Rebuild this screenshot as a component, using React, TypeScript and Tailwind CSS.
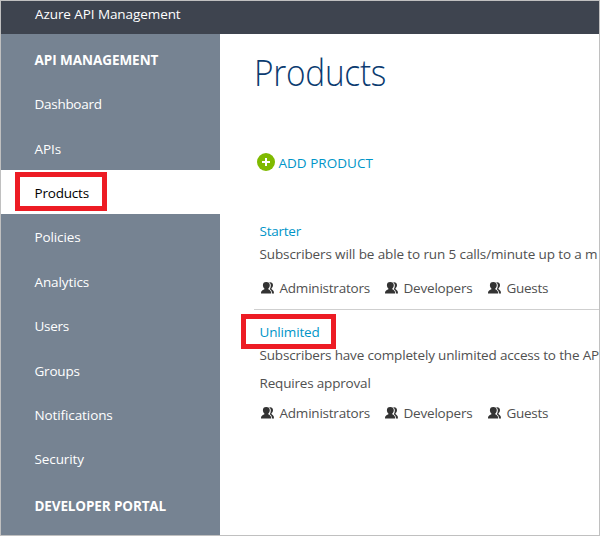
const navItems = [
  { label: 'Dashboard', tracking: 'tracking-[-0.28px]' },
  { label: 'APIs', tracking: 'tracking-[-0.1px]', nudge: true },
  { label: 'Products', tracking: 'tracking-[-0.2px]', active: true },
  { label: 'Policies', tracking: 'tracking-[-0.12px]' },
  { label: 'Analytics', tracking: 'tracking-[-0.1px]' },
  { label: 'Users', tracking: 'tracking-[-0.3px]' },
  { label: 'Groups', tracking: 'tracking-[-0.2px]', nudge: true },
  { label: 'Notifications', tracking: 'tracking-[-0.1px]' },
  { label: 'Security', tracking: 'tracking-[-0.1px]' },
];

function PeopleIcon() {
  return (
    <svg className="mb-px block h-[12px] w-[13px] shrink-0" viewBox="0 0 13 12" fill="#333">
      <path d="M8 .3C10.200-.3 12 .8 12 3c0 1.700-.8 2.700-1.500 3.300v.8c1 .9 2.500 1.500 2.500 4.400h-2c-.1-2.500-1-3.400-2.200-4.300.7-1.200 1.100-2.800 1-4.200C9.700 2 9 .9 8 .3z" />
      <path d="M5.200 0C7.700 0 8.800 1.200 8.800 3.300c0 1.600-.8 2.700-1.500 3.200v.8c1 .8 2.900 1.100 2.900 4.200H0c0-3.100 2.300-3.400 3.400-4.200v-.8C2.700 6 1.900 4.900 1.900 3.300 1.900 1.200 2.900 0 5.200 0z" />
    </svg>
  );
}

function Groups() {
  return (
    <div className="flex h-5 items-center text-[#505050]">
      <div className="flex w-[124px] items-center gap-[5.5px]"><PeopleIcon /><span className="tracking-[-0.22px]">Administrators</span></div>
      <div className="flex w-[103px] items-center gap-[5.5px]"><PeopleIcon /><span className="tracking-[-0.2px]">Developers</span></div>
      <div className="flex items-center gap-[5.5px]"><PeopleIcon /><span className="tracking-[-0.3px]">Guests</span></div>
    </div>
  );
}

export default function App() {
  return (
    <div className="flex h-[536px] w-[600px] flex-col overflow-hidden border border-[#c0c0c0] bg-white font-['Open_Sans','Noto_Sans',sans-serif] text-[13.5px] leading-5 whitespace-nowrap">
      <header className="h-[33px] shrink-0 bg-[#3e444f] pt-[3px] pl-[34px] text-white">
        <span className="tracking-[-0.08px]">Azure API Management</span>
      </header>
      <div className="flex min-h-0 flex-1">
        <nav className="w-[219px] shrink-0 bg-[#768392] text-white">
          <div className="h-[47.2px] pt-4 pl-[33.5px] font-bold"><span className="tracking-[-0.05px]">API MANAGEMENT</span></div>
          {navItems.map((item) => (
            <div key={item.label} className={`flex h-[44.4px] items-center ${item.active ? 'bg-white pl-[14px] text-black' : item.nudge ? 'pt-[2.4px] pl-[33.5px]' : 'pt-[1.2px] pl-[33.5px]'}`}>
              {item.active ? (
                <span className="mt-[-0.5px] flex h-[39px] w-[92px] items-center border-5 border-[#ed1c24] pt-[2px] pl-[14.5px]"><span className={item.tracking}>{item.label}</span></span>
              ) : (
                <span className={item.tracking}>{item.label}</span>
              )}
            </div>
          ))}
          <div className="pt-[15px] pl-[33.5px] font-bold"><span className="tracking-[-0.13px]">DEVELOPER PORTAL</span></div>
        </nav>
        <main className="min-w-0 flex-1 overflow-hidden">
          <h1 className="mt-[13px] ml-[33.5px] h-[50px] origin-left scale-x-[0.915] text-[36.5px] leading-[50px] font-light text-[#0b3b70]"><span className="tracking-[-0.3px]">Products</span></h1>
          <div className="mt-[56px] ml-[37px] flex h-5 items-center gap-[3.5px] text-[#0095c8]">
            <svg className="mb-[2px] h-[18px] w-[18px]" viewBox="0 0 18 18">
              <circle cx="9" cy="9" r="9" fill="#7fba00" />
              <path d="M9 5v8M5 9h8" stroke="#fff" strokeWidth="2" />
            </svg>
            <span className="tracking-[0.02px]">ADD PRODUCT</span>
          </div>
          <section className="mt-[48px] ml-[34px] h-[89px] border-b border-[#cfcfcf] pl-[5.5px] text-[#505050]">
            <div className="text-[#0095c8]"><span className="tracking-[-0.25px]">Starter</span></div>
            <div className="mt-[3px]"><span className="tracking-[-0.12px]">Subscribers will be able to run 5 calls/minute up to a m</span></div>
            <div className="mt-[14px] ml-[1.5px]"><Groups /></div>
          </section>
          <section className="ml-[21px] text-[#505050]">
            <div className="mt-[4px] flex h-[35px] w-[95px] items-center border-5 border-[#ed1c24] pl-[13.5px] text-[#0095c8]"><span className="tracking-[-0.15px]">Unlimited</span></div>
            <div className="mt-[-4px] ml-[18.5px]"><span className="tracking-[-0.16px]">Subscribers have completely unlimited access to the AP</span></div>
            <div className="mt-[8px] ml-[18.5px]"><span className="tracking-[-0.18px]">Requires approval</span></div>
            <div className="mt-[10px] ml-[20px]"><Groups /></div>
          </section>
        </main>
      </div>
    </div>
  );
}
